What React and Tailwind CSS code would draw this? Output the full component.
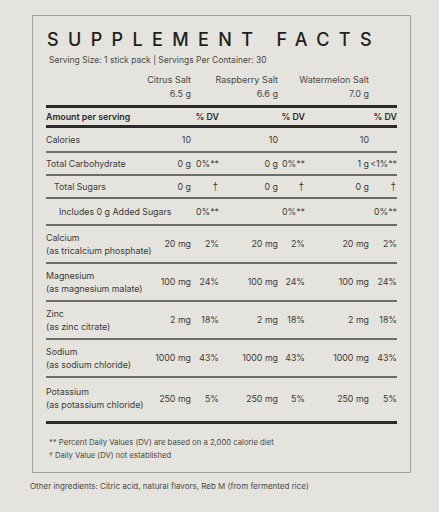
import React from 'react';

// column grid: label | amount | dv  x3
const cols = 'grid grid-cols-[108px_37px_28px_59px_27px_64px_28px] items-center';

const products = [
  { name: 'Citrus Salt', weight: '6.5 g' },
  { name: 'Raspberry Salt', weight: '6.6 g' },
  { name: 'Watermelon Salt', weight: '7.0 g' },
];

const simpleRows = [
  { label: 'Calories', h: 'h-[25px]', pl: 'pl-0', vals: [['10', ''], ['10', ''], ['10', '']] },
  { label: 'Total Carbohydrate', h: 'h-[23px]', pl: 'pl-0', vals: [['0 g', '0%**'], ['0 g', '0%**'], ['1 g', '<1%**']] },
  { label: 'Total Sugars', h: 'h-[23px]', pl: 'pl-[8px]', vals: [['0 g', '†'], ['0 g', '†'], ['0 g', '†']] },
  { label: 'Includes 0 g Added Sugars', h: 'h-[27px]', pl: 'pl-[13px]', vals: [['', '0%**'], ['', '0%**'], ['', '0%**']] },
];

const minerals = [
  { name: 'Calcium', source: '(as tricalcium phosphate)', amt: '20 mg', dv: '2%' },
  { name: 'Magnesium', source: '(as magnesium malate)', amt: '100 mg', dv: '24%' },
  { name: 'Zinc', source: '(as zinc citrate)', amt: '2 mg', dv: '18%' },
  { name: 'Sodium', source: '(as sodium chloride)', amt: '1000 mg', dv: '43%' },
  { name: 'Potassium', source: '(as potassium chloride)', amt: '250 mg', dv: '5%' },
];

const Cell = ({ children, className = '' }) => (
  <div className={`flex justify-end whitespace-nowrap ${className}`}>{children}</div>
);

export default function App() {
  return (
    <div className="w-[439px] h-[512px] bg-[#e4e3dd] overflow-hidden text-[#3b3b38] font-['Inter',sans-serif]">
      <div className="ml-[32px] mt-[15px] w-[379px] h-[458px] border border-[#a3a39d] px-[13px] pt-[13px]">
        <h1 className="pl-[1px] text-[18px] leading-[22px] font-medium tracking-[0.52em] text-[#1e1e1c] whitespace-nowrap">
          SUPPLEMENT FACTS
        </h1>
        <p className="pl-[3px] mt-[4px] text-[8.5px] leading-[10px] text-[#4a4a46]">
          Serving Size: 1 stick pack | Servings Per Container: 30
        </p>

        {/* product headers */}
        <div className={`${cols} mt-[8px] text-[9px] leading-[14px] text-[#4a4a46] pb-[4px]`}>
          <div />
          {products.map((p) => (
            <React.Fragment key={p.name}>
              <Cell>
                <div className="text-right">
                  <div>{p.name}</div>
                  <div>{p.weight}</div>
                </div>
              </Cell>
              <div />
            </React.Fragment>
          ))}
        </div>

        <div className={`${cols} h-[23px] border-t-[3px] border-b-[3px] border-[#2b2b29] text-[8.8px] font-semibold text-[#2b2b29]`}>
          <div className="whitespace-nowrap">Amount per serving</div>
          <div /><Cell>% DV</Cell>
          <div /><Cell>% DV</Cell>
          <div /><Cell>% DV</Cell>
        </div>

        {simpleRows.map((r) => (
          <div key={r.label} className={`${cols} ${r.h} border-b-2 border-[#6e6e69] text-[8.8px]`}>
            <div className={`whitespace-nowrap ${r.pl}`}>{r.label}</div>
            {r.vals.map((v, i) => (
              <React.Fragment key={i}>
                <Cell>{v[0]}</Cell>
                {v[1] === '†' ? (
                  <Cell className="pr-[1px] font-['Liberation_Sans',sans-serif] text-[10px]">{v[1]}</Cell>
                ) : (
                  <Cell>{v[1]}</Cell>
                )}
              </React.Fragment>
            ))}
          </div>
        ))}

        {minerals.map((m, idx) => (
          <div
            key={m.name}
            className={`${cols} ${idx === minerals.length - 1 ? 'h-[46px] border-b-[3px] border-[#2b2b29] items-start pt-[7px]' : 'h-[38px] border-b-2 border-[#6e6e69]'} text-[8.8px]`}
          >
            <div className="whitespace-nowrap leading-[13px]">
              <div>{m.name}</div>
              <div>{m.source}</div>
            </div>
            {[0, 1, 2].map((i) => (
              <React.Fragment key={i}>
                <Cell className={idx === minerals.length - 1 ? 'mt-[7px]' : ''}>{m.amt}</Cell>
                <Cell className={idx === minerals.length - 1 ? 'mt-[7px]' : ''}>{m.dv}</Cell>
              </React.Fragment>
            ))}
          </div>
        ))}

        <div className="pl-[3px] mt-[12px] text-[7.7px] leading-[13px] text-[#4a4a46]">
          <div>** Percent Daily Values (DV) are based on a 2,000 calorie diet</div>
          <div>† Daily Value (DV) not established</div>
        </div>
      </div>
      <p className="ml-[30px] mt-[7px] text-[8px] text-[#4a4a46]">
        Other ingredients: Citric acid, natural flavors, Reb M (from fermented rice)
      </p>
    </div>
  );
}
